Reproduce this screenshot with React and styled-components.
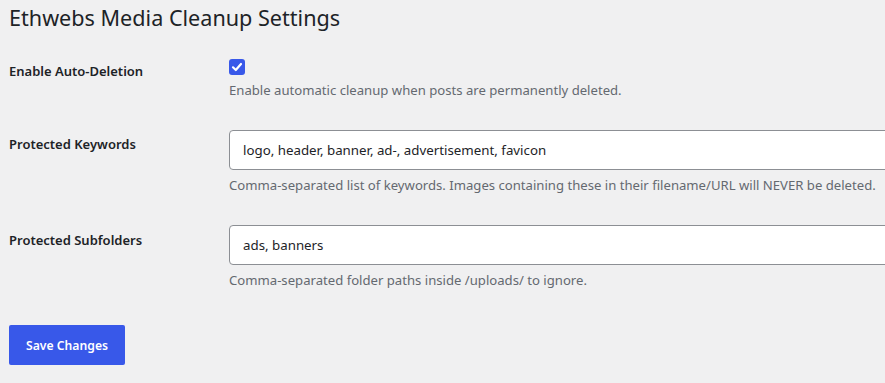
import React from 'react';
import styled, { createGlobalStyle } from 'styled-components';

const Global = createGlobalStyle`
  html, body {
    margin: 0;
    background: #f0f0f1;
    overflow: hidden;
  }
  body {
    font-family: "Noto Sans", "Open Sans", sans-serif;
    color: #1d2327;
    font-size: 13px;
  }
`;

const Wrap = styled.div`
  padding: 0 9px;
`;

const Title = styled.h1`
  font-size: 21.6px;
  font-weight: 400;
  line-height: 30px;
  margin: 3px 0 12px;
`;

const Row = styled.div`
  display: grid;
  grid-template-columns: 220px 1fr;
  padding: 14px 0 15px;
`;

const Label = styled.div`
  font-weight: 600;
  line-height: 20px;
  padding-top: ${p => p.$offset || 4}px;
`;

const Field = styled.div`
  display: flex;
  flex-direction: column;
  min-width: 0;
`;

const Check = styled.span`
  width: 16px;
  height: 16px;
  border-radius: 3px;
  background: #3858e9;
  display: flex;
  align-items: center;
  justify-content: center;
`;

const TextInput = styled.input`
  box-sizing: border-box;
  width: 720px;
  height: 40px;
  border: 1px solid #8c8f94;
  border-radius: 4px;
  background: #fff;
  padding: 0 13px;
  font: inherit;
  font-size: 13.3px;
  color: #1d2327;
  outline: none;
`;

const Desc = styled.p`
  margin: 4px 0 0;
  line-height: 22px;
  font-size: 13.13px;
  color: #646970;
  white-space: nowrap;
`;

const Button = styled.button`
  margin-top: 19px;
  height: 40px;
  padding: 0 17px;
  background: #3858e9;
  color: #fff;
  border: none;
  border-radius: 2px;
  font: inherit;
  font-size: 12.2px;
  font-weight: 600;
`;

const App = () => (
  <Wrap>
    <Global />
    <Title>Ethwebs Media Cleanup Settings</Title>

    <Row>
      <Label $offset={2}>Enable Auto-Deletion</Label>
      <Field>
        <Check>
          <svg width="12" height="12" viewBox="0 0 12 12">
            <path d="M2 6.3 L4.8 9 L10 3" fill="none" stroke="#fff" strokeWidth="2.2" strokeLinecap="round" strokeLinejoin="round" />
          </svg>
        </Check>
        <Desc>Enable automatic cleanup when posts are permanently deleted.</Desc>
      </Field>
    </Row>

    <Row>
      <Label>Protected Keywords</Label>
      <Field>
        <TextInput defaultValue="logo, header, banner, ad-, advertisement, favicon" />
        <Desc>Comma-separated list of keywords. Images containing these in their filename/URL will NEVER be deleted.</Desc>
      </Field>
    </Row>

    <Row>
      <Label $offset={5}>Protected Subfolders</Label>
      <Field>
        <TextInput defaultValue="ads, banners" />
        <Desc>Comma-separated folder paths inside /uploads/ to ignore.</Desc>
      </Field>
    </Row>

    <Button>Save Changes</Button>
  </Wrap>
);

export default App;
